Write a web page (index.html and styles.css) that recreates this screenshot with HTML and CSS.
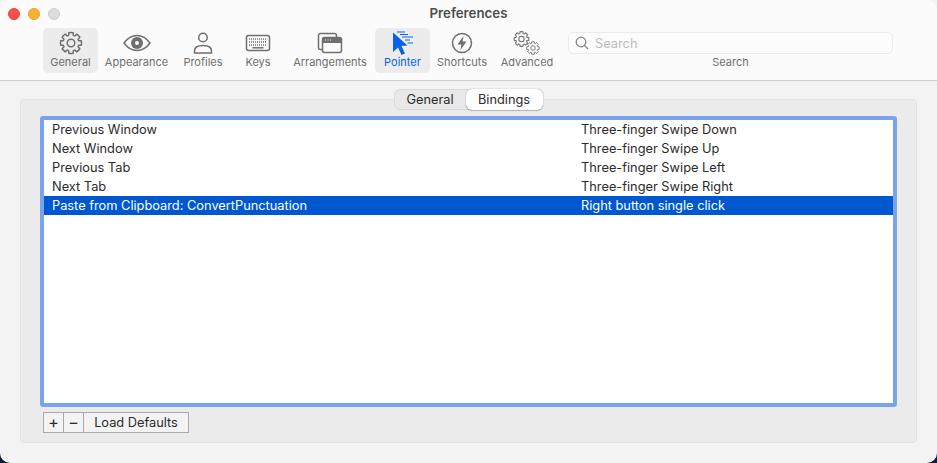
FILE: index.html
```html
<!DOCTYPE html>
<html lang="en">
<head>
  <meta charset="utf-8">
  <meta name="viewport" content="width=device-width, initial-scale=1.0">
  <title>Preferences</title>
  <link rel="stylesheet" href="styles.css">
</head>
<body>
  <svg class="defs" width="0" height="0">
    <g id="gear">
      <path id="seg" d="M-3.06-7.39L-2.3-7.7L-2.2-10.3A10.5 10.5 0 0 1 2.2-10.3L2.3-7.7L3.06-7.39"/>
      <use href="#seg" transform="rotate(45)"/>
      <use href="#seg" transform="rotate(90)"/>
      <use href="#seg" transform="rotate(135)"/>
      <use href="#seg" transform="rotate(180)"/>
      <use href="#seg" transform="rotate(225)"/>
      <use href="#seg" transform="rotate(270)"/>
      <use href="#seg" transform="rotate(315)"/>
      <circle r="3.8"/>
    </g>
  </svg>

  <div class="window">
    <header class="toolbar">
      <div class="titlebar">
        <div class="lights">
          <span class="light red"></span>
          <span class="light yellow"></span>
          <span class="light gray"></span>
        </div>
        <h1>Preferences</h1>
      </div>
      <nav class="tools">
        <div class="tool tool-general active">
          <svg class="icon" width="24" height="24" viewBox="-12 -12 24 24"><use href="#gear"/></svg>
          <span>General</span>
        </div>
        <div class="tool tool-appearance">
          <svg class="icon" width="30" height="24" viewBox="0 0 30 24">
            <path d="M2 12C6 6.500 10 4.500 15 4.500S24 6.500 28 12C24 17.500 20 19.500 15 19.500S6 17.500 2 12Z"/>
            <circle class="solid" cx="15" cy="12" r="6"/>
            <circle class="hole" cx="15" cy="12" r="2"/>
          </svg>
          <span>Appearance</span>
        </div>
        <div class="tool tool-profiles">
          <svg class="icon" width="24" height="24" viewBox="0 0 24 24">
            <circle cx="12" cy="6.500" r="4.300"/>
            <path d="M3.500 22V20C3.500 16.500 7 14.500 12 14.500S20.500 16.500 20.500 20V22Z"/>
          </svg>
          <span>Profiles</span>
        </div>
        <div class="tool tool-keys">
          <svg class="icon" width="26" height="24" viewBox="0 0 26 24">
            <rect x="1.500" y="4.500" width="23" height="15" rx="2"/>
            <path class="keys" d="M4 8h18M4 11h18M4 14h18"/>
            <path d="M7.500 16.800h11"/>
          </svg>
          <span>Keys</span>
        </div>
        <div class="tool tool-arrangements">
          <svg class="icon" width="26" height="24" viewBox="0 0 26 24">
            <path d="M5.500 18.500H3.500A2 2 0 0 1 1.500 16.500V4.500A2 2 0 0 1 3.500 2.500H17.500A2 2 0 0 1 19.500 4.500V6.500"/>
            <rect x="5.500" y="6.500" width="19" height="15" rx="2"/>
            <path class="solid-bar" d="M5.500 11.500V8.500A2 2 0 0 1 7.500 6.500H22.500A2 2 0 0 1 24.500 8.500V11.500Z"/>
            <path class="dots" d="M8 9h1M10.500 9h1M13 9h1"/>
          </svg>
          <span>Arrangements</span>
        </div>
        <div class="tool tool-pointer active">
          <svg class="icon" width="24" height="24" viewBox="0 0 24 24">
            <path class="arrow" d="M2 1.500L16.500 14.500L10.500 15L14 22.500L10.500 24L7 16.500L2 21Z"/>
            <path class="speed" d="M6 1H14M9 3.500H17M11 6H22M14 9H19M16.500 12H22"/>
          </svg>
          <span>Pointer</span>
        </div>
        <div class="tool tool-shortcuts">
          <svg class="icon" width="24" height="24" viewBox="0 0 24 24">
            <circle cx="12" cy="12" r="9.500"/>
            <path class="solid" d="M13.500 5L7.500 13.500H11.300L10.500 19L16.500 10.500H12.700Z"/>
          </svg>
          <span>Shortcuts</span>
        </div>
        <div class="tool tool-advanced">
          <svg class="icon" width="28" height="24" viewBox="0 0 28 24">
            <use href="#gear" transform="translate(8.500 8) scale(.7)"/>
            <use href="#gear" transform="translate(20 17) scale(.6)"/>
          </svg>
          <span>Advanced</span>
        </div>
        <div class="tool tool-search">
          <div class="search-field">
            <svg class="search-icon" width="14" height="14" viewBox="0 0 14 14">
              <circle cx="6" cy="6" r="4.800"/>
              <path d="M9.500 9.500L13 13"/>
            </svg>
            <span class="placeholder">Search</span>
          </div>
          <span>Search</span>
        </div>
      </nav>
    </header>

    <main class="content">
      <section class="panel">
        <div class="tabs">
          <span class="tab">General</span>
          <span class="tab selected">Bindings</span>
        </div>
        <div class="list">
          <div class="row"><span class="action">Previous Window</span><span>Three-finger Swipe Down</span></div>
          <div class="row"><span class="action">Next Window</span><span>Three-finger Swipe Up</span></div>
          <div class="row"><span class="action">Previous Tab</span><span>Three-finger Swipe Left</span></div>
          <div class="row"><span class="action">Next Tab</span><span>Three-finger Swipe Right</span></div>
          <div class="row selected"><span class="action">Paste from Clipboard: ConvertPunctuation</span><span>Right button single click</span></div>
        </div>
        <div class="buttons">
          <button class="small">+</button>
          <button class="small">−</button>
          <button class="load">Load Defaults</button>
        </div>
      </section>
    </main>
  </div>
</body>
</html>
```

FILE: styles.css
```css
* {
  box-sizing: border-box;
}

html {
  height: 100%;
  background: linear-gradient(#f4f4f4 50%, #0c1c34 50%);
}

body {
  margin: 0;
  height: 463px;
  overflow: hidden;
  font-family: Inter, "Liberation Sans", sans-serif;
  font-size: 12.8px;
  color: #2b2b2b;
}

.defs {
  display: block;
  height: 0;
}

.window {
  height: 463px;
  display: flex;
  flex-direction: column;
  background-color: #f3f3f3;
  border-radius: 10px;
  overflow: hidden;
}

.toolbar {
  height: 81px;
  background-color: #fbfbfb;
  border-bottom: 1px solid #cdcdcd;
}

.titlebar {
  height: 28px;
  display: flex;
  align-items: center;
  justify-content: center;
  position: relative;
}

.titlebar h1 {
  margin: 0 0 2px;
  font-size: 13.3px;
  font-weight: 600;
  color: #4c4c4c;
}

.lights {
  position: absolute;
  left: 8px;
  top: 8px;
  display: flex;
  gap: 8px;
}

.light {
  width: 12px;
  height: 12px;
  border-radius: 50%;
}

.red { background-color: #fc4d4a; border: 1px solid #e5403d; }
.yellow { background-color: #fdb02e; border: 1px solid #e5a02a; }
.gray { background-color: #dcdcdc; border: 1px solid #cbcbcb; }

.tools {
  height: 45px;
  padding-left: 43px;
  display: flex;
}

.tool {
  height: 45px;
  padding-top: 3px;
  display: flex;
  flex-direction: column;
  align-items: center;
  justify-content: flex-start;
  border-radius: 5px;
  font-size: 11px;
  color: #6f6f6f;
}

.tool > span {
  line-height: 14px;
  white-space: nowrap;
}

.tool.active {
  background-color: #ececec;
}

.tool-general { width: 55px; }
.tool-appearance { width: 77px; }
.tool-profiles { width: 56px; }
.tool-keys { width: 54px; }
.tool-arrangements { width: 90px; }
.tool-pointer { width: 55px; color: #0b62ea; }
.tool-shortcuts { width: 64px; }
.tool-advanced { width: 66px; }

.icon {
  fill: none;
  stroke: #6f6f6f;
  stroke-width: 1.5;
  stroke-linejoin: round;
  overflow: visible;
}

.icon .solid { fill: #6f6f6f; stroke: none; }
.icon .hole { fill: #fbfbfb; stroke: none; }
.icon .solid-bar { fill: #6f6f6f; stroke: #6f6f6f; stroke-width: 1; }
.icon .dots { stroke: #fbfbfb; stroke-width: 1; }
.icon .keys { stroke-width: 1.6; stroke-dasharray: 1 1; }

.tool-pointer .arrow { fill: #0b62ea; stroke: none; }
.tool-pointer .speed { stroke: #0b62ea; stroke-width: 1.2; }

.tool-search {
  width: 325px;
  margin-left: 8px;
  padding-top: 4px;
}

.search-field {
  width: 100%;
  height: 22px;
  padding-left: 6px;
  display: flex;
  align-items: center;
  gap: 6px;
  background-color: #fcfcfc;
  border: 1px solid #ececec;
  border-radius: 5px;
  font-size: 12.8px;
  color: #bdbdbd;
}

.search-icon {
  fill: none;
  stroke: #858585;
  stroke-width: 1.3;
}

.tool-search > span {
  margin-top: 1px;
}

.content {
  flex: 1;
  padding: 18px 20px 20px;
  display: flex;
}

.panel {
  flex: 1;
  padding: 0 19px;
  background-color: #ebebeb;
  border: 1px solid #e3e3e3;
  border-radius: 4px;
  display: flex;
  flex-direction: column;
}

.tabs {
  align-self: center;
  height: 21px;
  margin: -11px 0 6px -1px;
  display: flex;
  background-color: #e8e8e8;
  border: 1px solid #dadada;
  border-radius: 6px;
}

.tab {
  width: 71px;
  line-height: 19px;
  text-align: center;
}

.tab.selected {
  width: 77px;
  margin: -1px -1px -1px 0;
  line-height: 21px;
  background-color: #fff;
  border-radius: 6px;
  box-shadow: 0 0 1px rgba(0, 0, 0, 0.5), 0 1px 1px rgba(0, 0, 0, 0.2);
}

.list {
  height: 291px;
  background-color: #fff;
  border: 4px solid #7aa3ef;
  border-radius: 3px;
}

.row {
  height: 19px;
  padding-left: 8px;
  display: flex;
  line-height: 19px;
}

.row.selected {
  background-color: #0058d0;
  color: #fff;
}

.action {
  width: 529px;
}

.buttons {
  margin: 5px 0 0 3px;
  display: flex;
}

.buttons button {
  height: 21px;
  padding: 0;
  font-family: inherit;
  font-size: 12.8px;
  color: #2b2b2b;
  background-color: #f3f3f3;
  border: 1px solid #a9a9a9;
  margin-right: -1px;
}

.buttons .small {
  width: 21px;
  font-size: 16px;
  line-height: 17px;
}

.load {
  width: 106px;
}
```
